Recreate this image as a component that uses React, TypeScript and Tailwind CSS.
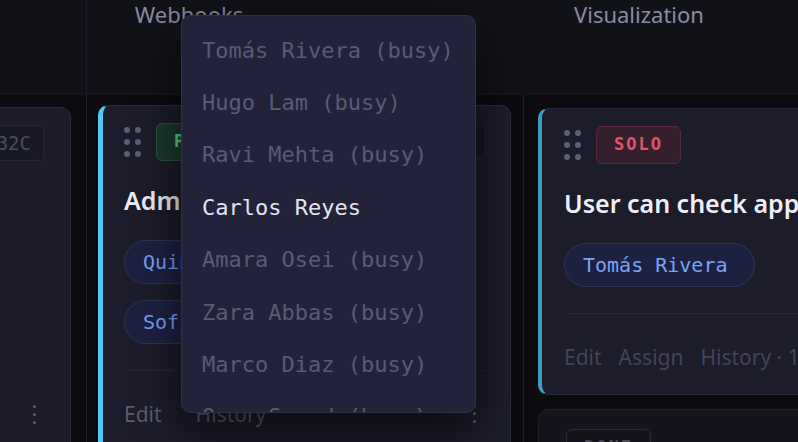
import { useState } from "react";

type Member = { name: string; busy: boolean };

const MEMBERS: Member[] = [
  { name: "Tomás Rivera", busy: true },
  { name: "Hugo Lam", busy: true },
  { name: "Ravi Mehta", busy: true },
  { name: "Carlos Reyes", busy: false },
  { name: "Amara Osei", busy: true },
  { name: "Zara Abbas", busy: true },
  { name: "Marco Diaz", busy: true },
  { name: "Omar Sayed", busy: true },
];

const MONO = "font-['DejaVu_Sans_Mono',monospace]";

function DragHandle() {
  return (
    <div className="grid grid-cols-2 gap-x-[5px] gap-y-[6px]">
      {Array.from({ length: 6 }).map((_, i) => (
        <span key={i} className="h-[6px] w-[6px] rounded-full bg-[#5f5f76]" />
      ))}
    </div>
  );
}

function Kebab() {
  return (
    <div className="flex flex-col items-center gap-[5px]">
      <span className="h-[3px] w-[3px] rounded-full bg-[#5a5a70]" />
      <span className="h-[3px] w-[3px] rounded-full bg-[#5a5a70]" />
      <span className="h-[3px] w-[3px] rounded-full bg-[#5a5a70]" />
    </div>
  );
}

function IdTag({ id }: { id: string }) {
  return (
    <span
      className={`flex h-[36px] items-center rounded-[5px] border border-[#262636] bg-[#181825] px-[12px] text-[19px] text-[#4b4b60] ${MONO}`}
    >
      {id}
    </span>
  );
}

function Chip({ name }: { name: string }) {
  return (
    <span
      className={`flex h-[44px] items-center rounded-full border border-[#2d3456] bg-[#1d2140] pl-[18px] pr-[26px] text-[20px] text-[#7aa2f7] ${MONO}`}
    >
      {name}
    </span>
  );
}

function AssignMenu({ members }: { members: Member[] }) {
  const [picked, setPicked] = useState<string | null>(null);
  return (
    <div className="absolute left-[181px] top-[15px] h-[398px] w-[295px] overflow-hidden rounded-[10px] border border-[#2f2f47] bg-[#22223a] py-2 shadow-[0_16px_48px_rgba(0,0,0,0.65)]">
      {members.map((m) => (
        <button
          key={m.name}
          type="button"
          disabled={m.busy}
          onClick={() => setPicked(m.name)}
          className={`flex h-[52.4px] w-full items-center whitespace-nowrap px-5 text-left text-[22px] ${MONO} ${
            m.busy ? "text-[#5a5a72]" : picked === m.name ? "text-white" : "text-[#e4e4ee]"
          }`}
        >
          {m.busy ? `${m.name} (busy)` : m.name}
        </button>
      ))}
    </div>
  );
}

export default function App() {
  return (
    <div className="relative h-[442px] w-[798px] overflow-hidden bg-[#0b0b10] font-['Noto_Sans',sans-serif]">
      {/* group header strip */}
      <div className="flex h-[95px] border-b border-[#16161e] bg-[#121219] text-[22px] leading-[28px] text-[#8a8aa3]">
        <div className="w-[87px] shrink-0 border-r border-[#1f1f29]" />
        <div className="w-[204px] shrink-0 text-center">Webhooks</div>
        <div className="w-[283px] shrink-0" />
        <div>Visualization</div>
      </div>

      {/* board columns */}
      <div className="flex h-[347px]">
        <div className="flex w-[87px] shrink-0 justify-end overflow-hidden border-r border-[#1f1f29] pr-[15px] pt-[12px]">
          <div className="flex h-[360px] w-[380px] shrink-0 flex-col rounded-[10px] border border-[#2a2a3c] bg-[#1b1b2a] pr-[26px] pt-[17px]">
            <div className="flex justify-end">
              <IdTag id="BLD-432C" />
            </div>
            <div className="mt-[244px] flex justify-end pr-[8px]">
              <Kebab />
            </div>
          </div>
        </div>

        <div className="w-[437px] shrink-0 border-r border-[#1f1f29] pl-[11px] pr-[12px] pt-[10px]">
          <div className="h-[360px] overflow-hidden rounded-[10px] border border-l-[5px] border-[#2a2a3d] border-l-[#52c8f8] bg-[#1c1c2b] pl-[21px] pr-[24px] pt-[17px]">
            <div className="flex h-[38px] items-center">
              <DragHandle />
              <span
                className={`ml-[15px] flex h-[38px] items-center rounded-[6px] border border-[#2c5142] bg-[#1c3830] px-[17px] text-[17px] font-bold tracking-[0.12em] text-[#5fd38a] ${MONO}`}
              >
                PAIR
              </span>
              <span className="ml-auto">
                <IdTag id="BLD-418" />
              </span>
            </div>
            <h3 className="mt-[23px] whitespace-nowrap text-[25px] font-semibold leading-[32px] text-[#eeeef5]">
              Admin can replay events
            </h3>
            <div className="mt-[24px] flex flex-wrap gap-[16px]">
              <Chip name="Quinn Abernathy" />
              <Chip name="Sofia Delacroix" />
            </div>
            <div className="mt-[26px] border-t border-[#262638]" />
            <div className="flex h-[80px] items-start pt-[28px] text-[21px] text-[#5d5d72]">
              <span>Edit</span>
              <span className="ml-[34px]">History</span>
              <span className="ml-auto self-center pb-[24px] pr-[10px]">
                <Kebab />
              </span>
            </div>
          </div>
        </div>

        <div className="flex min-w-0 flex-1 flex-col gap-[14px] overflow-hidden pl-[14px] pt-[13px]">
          <div className="w-[430px] shrink-0 rounded-[10px] border border-l-[4px] border-[#2a2a3d] border-l-[#3a9cc2] bg-[#1c1c2b] pl-[22px] pt-[17px]">
            <div className="flex h-[38px] items-center">
              <DragHandle />
              <span
                className={`ml-[15px] flex h-[38px] items-center rounded-[6px] border border-[#58283a] bg-[#33202c] px-[17px] text-[17px] font-bold tracking-[0.12em] text-[#e5536b] ${MONO}`}
              >
                SOLO
              </span>
            </div>
            <h3 className="mt-[23px] whitespace-nowrap text-[25px] font-semibold leading-[32px] text-[#eeeef5]">
              User can check app status
            </h3>
            <div className="mt-[24px] flex">
              <Chip name="Tomás Rivera" />
            </div>
            <div className="mt-[26px] border-t border-[#262638]" />
            <div className="flex h-[80px] items-start gap-[17px] whitespace-nowrap pt-[28px] text-[21px] text-[#43435a]">
              <span>Edit</span>
              <span>Assign</span>
              <span>History · 1d ago</span>
            </div>
          </div>

          <div className="h-[120px] w-[430px] shrink-0 rounded-[10px] border border-[#20202c] bg-[#14141c] pl-[27px] pt-[19px]">
            <span
              className={`inline-flex h-[38px] items-center rounded-[6px] border border-[#2a2a36] px-[17px] text-[17px] font-bold tracking-[0.12em] text-[#4a4a5c] ${MONO}`}
            >
              DONE
            </span>
          </div>
        </div>
      </div>

      <AssignMenu members={MEMBERS} />
    </div>
  );
}
